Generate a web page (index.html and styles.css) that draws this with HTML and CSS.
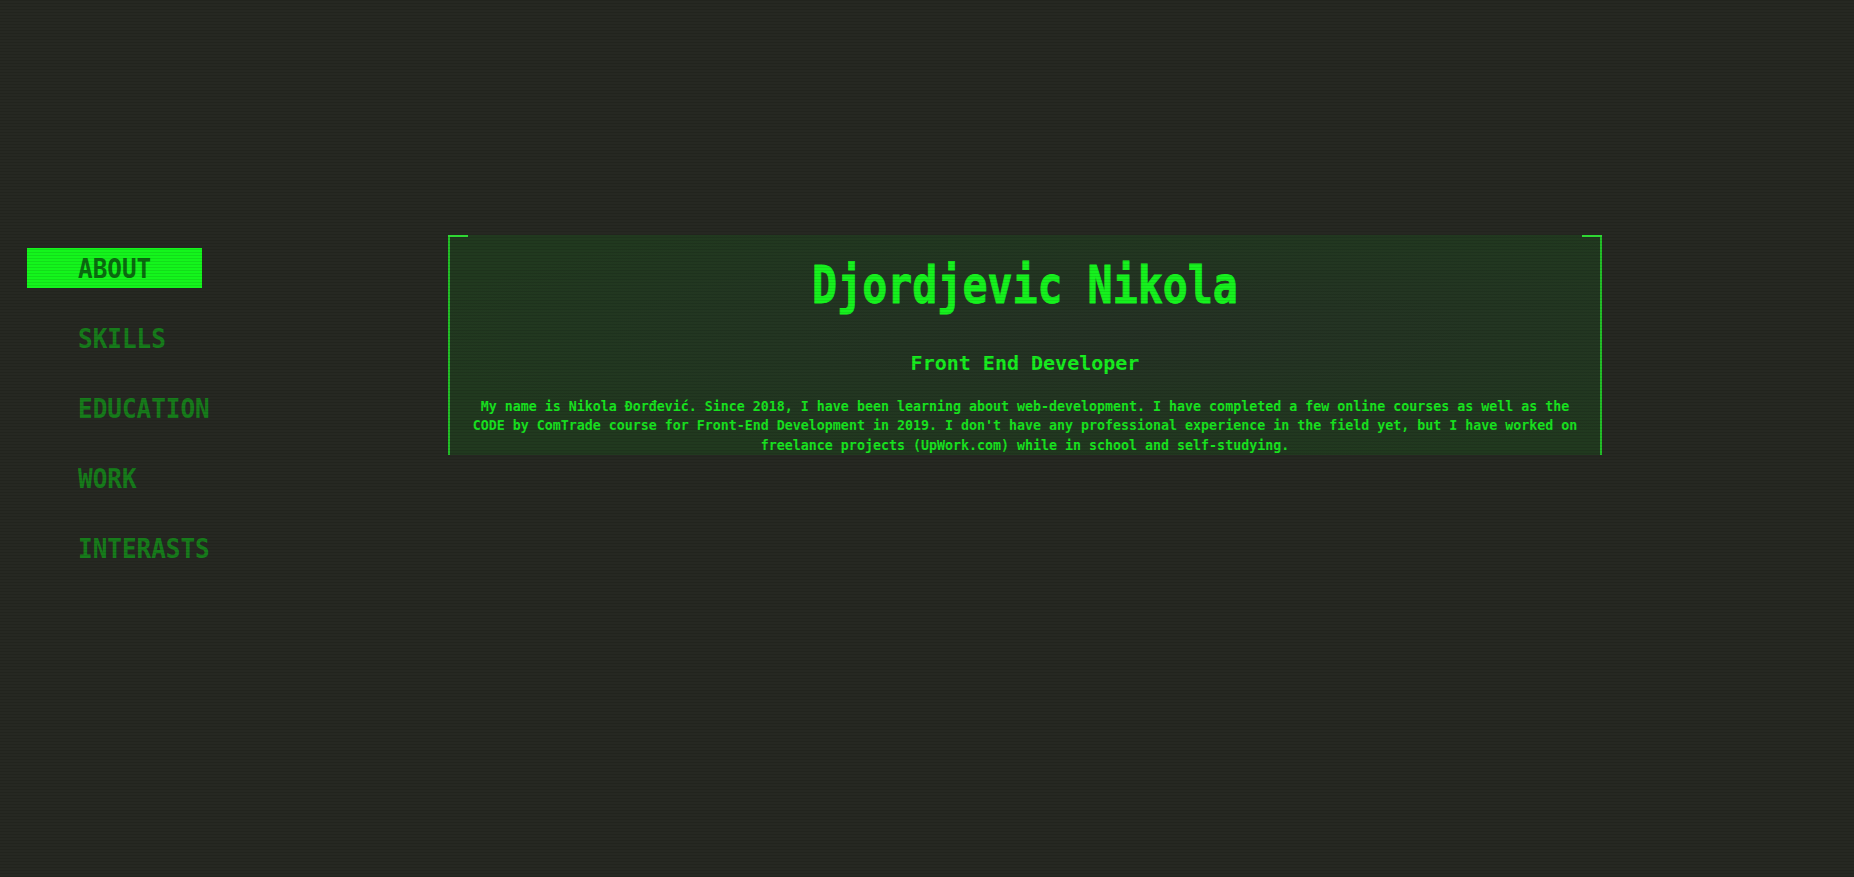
FILE: index.html
```html
<!DOCTYPE html>
<html lang="en">
<head>
<meta charset="utf-8">
<title>Djordjevic Nikola</title>
<link rel="stylesheet" href="styles.css">
</head>
<body>
<div class="page">
  <nav class="nav">
    <a class="nav-item active" href="#"><span>ABOUT</span></a>
    <a class="nav-item" href="#"><span>SKILLS</span></a>
    <a class="nav-item" href="#"><span>EDUCATION</span></a>
    <a class="nav-item" href="#"><span>WORK</span></a>
    <a class="nav-item" href="#"><span>INTERASTS</span></a>
  </nav>
  <main class="panel">
    <h1 class="title">Djordjevic Nikola</h1>
    <h2 class="subtitle">Front End Developer</h2>
    <p class="bio">My name is Nikola Đorđević. Since 2018, I have been learning about web-development. I have completed a few online courses as well as the CODE by ComTrade course for Front-End Development in 2019. I don't have any professional experience in the field yet, but I have worked on freelance projects (UpWork.com) while in school and self-studying.</p>
  </main>
</div>
</body>
</html>
```

FILE: styles.css
```css
html, body {
  margin: 0;
  padding: 0;
}

body {
  background: #262822;
  min-height: 877px;
  font-family: "DejaVu Sans Mono", "Liberation Mono", monospace;
  font-weight: bold;
  position: relative;
}

body::after {
  content: "";
  position: fixed;
  inset: 0;
  pointer-events: none;
  background: repeating-linear-gradient(to bottom, rgba(0, 0, 0, 0.09) 0, rgba(0, 0, 0, 0.09) 1px, transparent 1px, transparent 3px);
}

.page {
  display: flex;
  align-items: flex-start;
}

.nav {
  display: flex;
  flex-direction: column;
  gap: 30px;
  padding-left: 27px;
  margin-top: 248px;
  width: 175px;
  flex: none;
}

.nav-item {
  display: block;
  height: 40px;
  line-height: 42px;
  padding-left: 51px;
  font-size: 27px;
  color: #177c1b;
  text-decoration: none;
  white-space: nowrap;
}

.nav-item span {
  display: inline-block;
  transform: scaleX(0.9);
  transform-origin: left center;
}

.nav-item.active {
  background: #14f51c;
  color: #0b6c10;
}

.panel {
  position: relative;
  box-sizing: border-box;
  margin-top: 235px;
  margin-left: 246px;
  width: 1154px;
  flex: none;
  padding: 20px 16px 0;
  border-left: 2px solid #22bf27;
  border-right: 2px solid #22bf27;
  background:
    radial-gradient(ellipse at 60% 45%, rgba(38, 48, 38, 0.85) 0%, rgba(38, 48, 38, 0) 75%),
    #21391f;
  color: #17ee1f;
  text-align: center;
}

.panel::before,
.panel::after {
  content: "";
  position: absolute;
  top: 0;
  width: 20px;
  height: 2px;
  background: #2fd834;
}

.panel::before {
  left: -2px;
}

.panel::after {
  right: -2px;
}

.title {
  margin: 0;
  font-size: 52px;
  line-height: 60px;
  font-weight: bold;
  transform: scaleX(0.8);
  color: #16f21e;
  -webkit-text-stroke: 0.8px #16f21e;
}

.subtitle {
  margin: 36px 0 0;
  font-size: 20px;
  line-height: 24px;
  font-weight: bold;
  color: #17ee1f;
}

.bio {
  margin: 22px 0 0;
  font-size: 13.3px;
  line-height: 19.3px;
  font-weight: bold;
  color: #18e31f;
}
```
